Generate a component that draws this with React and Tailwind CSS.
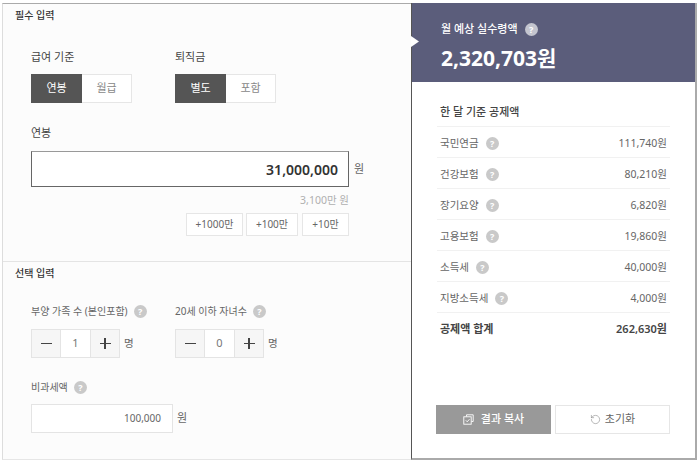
import { RotateCcw } from "lucide-react";

const FONT = "font-['Noto_Sans','Noto_Sans_CJK_KR',sans-serif]";

function Help({ dark }) {
  return (
    <span className={`inline-flex w-[13px] h-[13px] shrink-0 items-center justify-center rounded-full text-[9px] leading-none font-bold text-white ${dark ? "bg-[#c4c5cf]" : "bg-[#c9c9c9]"}`}>
      ?
    </span>
  );
}

function Toggle({ on, off }) {
  return (
    <div className="flex h-[29px] w-[101px] text-[11px]">
      <div className="flex w-[51px] items-center justify-center bg-[#555555] text-white">{on}</div>
      <div className="flex w-[50px] items-center justify-center border border-l-0 border-[#e6e6e6] bg-white text-[#888888]">{off}</div>
    </div>
  );
}

function AddButton({ width, label }) {
  return (
    <div className={`flex h-[23px] items-center justify-center border border-[#e6e6e6] bg-white text-[10px] text-[#666666] ${width}`}>
      {label}
    </div>
  );
}

function Stepper({ value }) {
  return (
    <div className="flex items-center">
      <div className="flex h-[29px] w-[89px] shrink-0 border border-[#e4e4e4] bg-white">
        <div className="flex w-[28px] items-center justify-center bg-[#f6f6f6]">
          <span className="h-[1.5px] w-[11px] bg-[#444444]" />
        </div>
        <div className="flex flex-1 items-center justify-center border-x border-[#e4e4e4] text-[11px] text-[#777777]">{value}</div>
        <div className="relative flex w-[28px] items-center justify-center bg-[#f6f6f6]">
          <span className="h-[1.5px] w-[11px] bg-[#444444]" />
          <span className="absolute h-[11px] w-[1.5px] bg-[#444444]" />
        </div>
      </div>
      <span className="ml-[4px] text-[10.5px] text-[#666666]">명</span>
    </div>
  );
}

function Row({ label, amount }) {
  return (
    <div className="flex h-[31px] items-center justify-between border-t border-[#f1f1f1] pl-[3px] pr-[3px] pt-[3px] text-[10.5px] text-[#666666]">
      <span className="flex items-center gap-[7px]">
        {label} <Help />
      </span>
      <span>{amount}</span>
    </div>
  );
}

export default function App() {
  return (
    <div className={`${FONT} h-[463px] w-[700px] overflow-hidden bg-white pl-[2px] pt-[3px]`}>
      <div className="flex h-[457px] w-[695px]">
        {/* left */}
        <div className="flex w-[409px] flex-col border-b border-l border-t border-b-[#e6e6e6] border-l-[#dddddd] border-t-[#aaaaaa] bg-[#fcfcfc]">
          <div className="h-[258px] border-b border-[#e4e4e4] pl-[12px] pt-[4px]">
            <div className="text-[10px] font-medium leading-[15px] text-[#333333]">필수 입력</div>
            <div className="ml-[16px] mt-[25px] flex gap-[43px]">
              <div>
                <div className="text-[11px] leading-[17px] text-[#444444]">급여 기준</div>
                <div className="mt-[9px]"><Toggle on="연봉" off="월급" /></div>
              </div>
              <div>
                <div className="text-[11px] leading-[17px] text-[#444444]">퇴직금</div>
                <div className="mt-[9px]"><Toggle on="별도" off="포함" /></div>
              </div>
            </div>
            <div className="ml-[16px] mt-[21px] text-[11px] leading-[17px] text-[#444444]">연봉</div>
            <div className="ml-[16px] mt-[10px] flex items-center">
              <div className="flex h-[36px] w-[318px] items-center justify-end border border-[#666666] border-t-[#999999] bg-white pr-[10px] text-[14px] font-semibold text-[#333333]">
                31,000,000
              </div>
              <span className="ml-[5px] text-[11px] text-[#666666]">원</span>
            </div>
            <div className="ml-[16px] mt-[5px] w-[318px] text-right text-[10.5px] leading-[16px] text-[#b0b0b0]">3,100만 원</div>
            <div className="ml-[16px] mt-[5px] flex w-[318px] justify-end">
              <AddButton width="w-[57px]" label="+1000만" />
              <div className="ml-[3px]"><AddButton width="w-[52px]" label="+100만" /></div>
              <div className="ml-[4px]"><AddButton width="w-[47px]" label="+10만" /></div>
            </div>
          </div>
          <div className="flex-1 pl-[12px] pt-[4px]">
            <div className="text-[10px] font-medium leading-[15px] text-[#333333]">선택 입력</div>
            <div className="ml-[16px] mt-[22px] flex">
              <div className="w-[144px]">
                <div className="flex h-[17px] items-center gap-[6px] whitespace-nowrap text-[10px] text-[#666666]">
                  부양 가족 수 (본인포함) <Help />
                </div>
                <div className="mt-[9px]"><Stepper value="1" /></div>
              </div>
              <div>
                <div className="flex h-[17px] items-center gap-[6px] whitespace-nowrap text-[10px] text-[#666666]">
                  20세 이하 자녀수 <Help />
                </div>
                <div className="mt-[9px]"><Stepper value="0" /></div>
              </div>
            </div>
            <div className="ml-[16px] mt-[21px] flex h-[17px] items-center gap-[6px] text-[10px] text-[#666666]">
              비과세액 <Help />
            </div>
            <div className="ml-[16px] mt-[8px] flex items-center">
              <div className="flex h-[29px] w-[142px] items-center justify-end border border-[#e4e4e4] bg-white pr-[11px] text-[10px] text-[#666666]">
                100,000
              </div>
              <span className="ml-[4px] text-[11px] text-[#666666]">원</span>
            </div>
          </div>
        </div>
        {/* right */}
        <div className="flex w-[286px] flex-col border-b-2 border-l border-r-2 border-b-[#aaaaaa] border-l-[#555555] border-r-[#aaaaaa] bg-white">
          <div className="relative h-[79px] bg-[#5b5d7b] pl-[29px] pt-[18px] text-white">
            <span className="absolute left-[-1px] top-[33px] h-[11px] w-[8px] bg-white [clip-path:polygon(0_0,100%_50%,0_100%)]" />
            <div className="flex h-[16px] items-center gap-[7px] text-[11px] font-medium">
              월 예상 실수령액 <Help dark />
            </div>
            <div className="mt-[5px] text-[21px] font-bold leading-[32px]">2,320,703원</div>
          </div>
          <div className="flex-1 px-[25px] pt-[21px]">
            <div className="h-[23px] pl-[3px] text-[11px] font-medium leading-[17px] text-[#444444]">한 달 기준 공제액</div>
            <Row label="국민연금" amount="111,740원" />
            <Row label="건강보험" amount="80,210원" />
            <Row label="장기요양" amount="6,820원" />
            <Row label="고용보험" amount="19,860원" />
            <Row label="소득세" amount="40,000원" />
            <Row label="지방소득세" amount="4,000원" />
            <div className="flex h-[31px] items-center justify-between border-t border-[#f1f1f1] pl-[3px] pr-[3px] pt-[3px] text-[11px] font-semibold text-[#444444]">
              <span>공제액 합계</span>
              <span>262,630원</span>
            </div>
            <div className="ml-[-1px] mt-[62px] flex gap-[4px]">
              <div className="flex h-[29px] w-[115px] items-center justify-center gap-[7px] bg-[#999999] text-[11px] font-medium text-white">
                <svg width="11" height="11" viewBox="0 0 11 11" fill="none" stroke="white" strokeWidth="0.9">
                  <path d="M3.5 2.5V0.8H10.2V7.5H8.5" />
                  <rect x="0.8" y="2.8" width="7.4" height="7.4" />
                  <path d="M2.8 6.3l1.4 1.5 2.3-2.6" />
                </svg>
                결과 복사
              </div>
              <div className="flex h-[29px] w-[115px] items-center justify-center gap-[4px] border border-[#e6e6e6] bg-white text-[11px] text-[#666666]">
                <RotateCcw size={11} strokeWidth={1.3} color="#888888" />
                초기화
              </div>
            </div>
          </div>
        </div>
      </div>
    </div>
  );
}
